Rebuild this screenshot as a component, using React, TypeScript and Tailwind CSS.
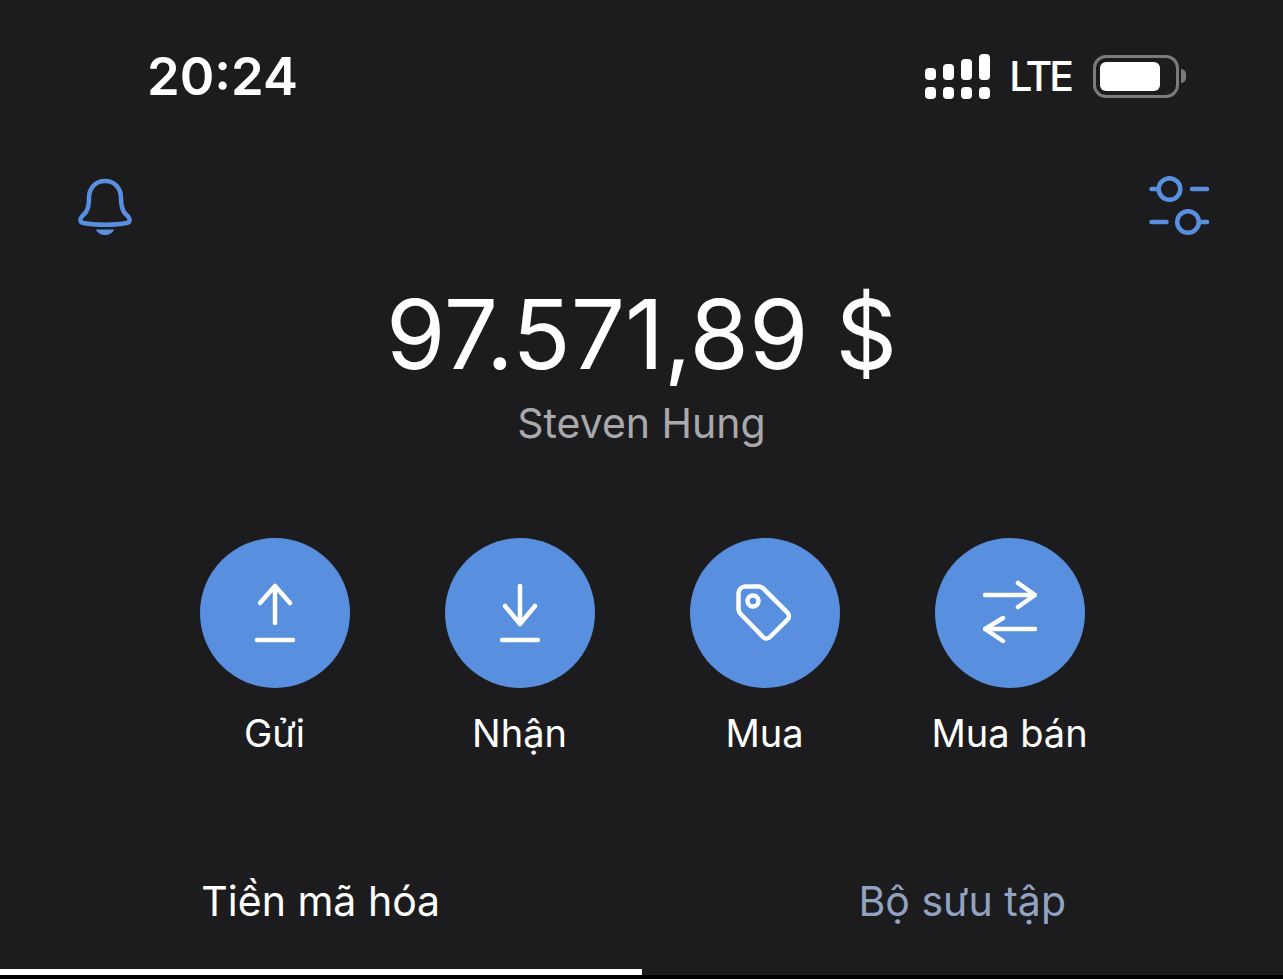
import type { ReactNode } from "react";

const ink = "stroke-white";

function Bell() {
  return (
    <svg width="56" height="60" viewBox="0 0 56 60" fill="none" className="text-[#588fde]">
      <path
        d="M28 3c-10 0-16 7.500-16 17 0 5-.5 10-3 14-1.500 2.500-5 4.500-5.500 7-.5 2 .5 3.500 3 4 6.500 1.300 13.500 1.700 21.500 1.700s15-.4 21.500-1.700c2.500-.5 3.500-2 3-4-.5-2.500-4-4.500-5.500-7-2.500-4-3-9-3-14 0-9.500-6-17-16-17z"
        stroke="currentColor"
        strokeWidth="4.500"
      />
      <path d="M19 51.500h18c-1 3.500-5 5.500-9 5.500s-8-2-9-5.500z" fill="currentColor" />
    </svg>
  );
}

function Sliders() {
  return (
    <svg width="62" height="62" viewBox="0 0 62 62" fill="none" stroke="#588fde" strokeWidth="4.500" strokeLinecap="round" className="-mt-[2px]">
      <path d="M2.500 13h6M43 13h15M2.500 46h15M52 46h6" />
      <circle cx="20.500" cy="13" r="10.800" />
      <circle cx="39" cy="46" r="10.800" />
    </svg>
  );
}

function Upload() {
  return (
    <svg width="44" height="62" viewBox="0 0 44 62" fill="none" className={ink} strokeWidth="4.500" strokeLinecap="round" strokeLinejoin="round">
      <path d="M22 41V4M7 21 22 4l15 17M4 58h36" />
    </svg>
  );
}

function Download() {
  return (
    <svg width="44" height="62" viewBox="0 0 44 62" fill="none" className={ink} strokeWidth="4.500" strokeLinecap="round" strokeLinejoin="round">
      <path d="M22 4v38M7 24l15 18 15-18M4 58h36" />
    </svg>
  );
}

function Tag() {
  return (
    <svg width="58" height="58" viewBox="0 0 58 58" fill="none" className={ink} strokeWidth="4.500" strokeLinecap="round" strokeLinejoin="round">
      <path d="M2.500 9.500c0-4 3-7 7-7h13c2 0 3.500.7 5 2.200l24 24c2 2 2 5 0 7L34 53c-2 2-5 2-7 0L4.700 30c-1.500-1.500-2.200-3-2.200-5z" />
      <circle cx="17" cy="17" r="5.500" />
    </svg>
  );
}

function Swap() {
  return (
    <svg width="54" height="66" viewBox="0 0 54 66" fill="none" className={ink} strokeWidth="4.500" strokeLinecap="round" strokeLinejoin="round">
      <path d="M2 15h50M35 3l17 12-17 12M52 49H2M20 38 2 49l18 12" />
    </svg>
  );
}

function Action({ label, icon }: { label: string; icon: ReactNode }) {
  return (
    <div className="flex w-[245px] flex-col items-center">
      <div className="flex h-[150px] w-[150px] items-center justify-center rounded-full bg-[#588fde]">{icon}</div>
      <span className="mt-[22px] text-[38px] leading-[46px] text-white">{label}</span>
    </div>
  );
}

function Signal() {
  const bars = ["h-[12px]", "h-[16px]", "h-[21px]", "h-[26px]"];
  return (
    <div className="flex gap-[7px]">
      {bars.map((h) => (
        <div key={h} className="flex w-[11px] flex-col justify-end gap-[7px]">
          <div className={`${h} rounded-[4px] bg-white`} />
          <div className="h-[12px] rounded-[4px] bg-white" />
        </div>
      ))}
    </div>
  );
}

function Battery() {
  return (
    <div className="flex items-center gap-[2px]">
      <div className="h-[43px] w-[86px] rounded-[13px] border-[3px] border-[#7b7b7d] p-[4px]">
        <div className="h-full w-[60px] rounded-[6px] bg-white" />
      </div>
      <div className="h-[14px] w-[5px] rounded-r-full bg-[#7b7b7d]" />
    </div>
  );
}

export default function App() {
  return (
    <div className="flex h-[979px] w-full flex-col overflow-hidden bg-[#1c1c1e] font-['Inter',sans-serif] text-white">
      {/* status bar */}
      <div className="flex h-[152px] items-start justify-between pl-[147px] pr-[97px] pt-[46px]">
        <span className="text-[52.500px] font-semibold leading-[60px]">20:24</span>
        <div className="mt-[7px] flex items-center">
          <Signal />
          <span className="ml-[19px] mr-[22px] text-[41px] font-medium leading-[46px] tracking-[-3px]">LTE</span>
          <Battery />
        </div>
      </div>

      <div className="flex items-start justify-between pl-[77px] pr-[72px] pt-[26px]">
        <Bell />
        <Sliders />
      </div>

      <div className="mt-[46px] flex flex-col items-center">
        <div className="text-[96px] leading-[100px]">97.571,89 $</div>
        <div className="mt-[15px] text-[41px] leading-[48px] text-[#a9a9ac]">Steven Hung</div>
      </div>

      <div className="ml-[1px] mt-[91px] flex justify-center">
        <Action label="Gửi" icon={<Upload />} />
        <Action label="Nhận" icon={<Download />} />
        <Action label="Mua" icon={<Tag />} />
        <Action label="Mua bán" icon={<Swap />} />
      </div>

      {/* tabs */}
      <div className="mt-auto flex">
        <div className="flex-1 pb-[43px] text-center text-[41px] leading-[50px]">Tiền mã hóa</div>
        <div className="flex-1 pb-[43px] text-center text-[41px] leading-[50px] text-[#92a3c2]">Bộ sưu tập</div>
      </div>
      <div className="h-[10px] bg-black">
        <div className="h-[6px] bg-[#1c1c1e]">
          <div className="h-full w-[642px] bg-white" />
        </div>
      </div>
    </div>
  );
}
